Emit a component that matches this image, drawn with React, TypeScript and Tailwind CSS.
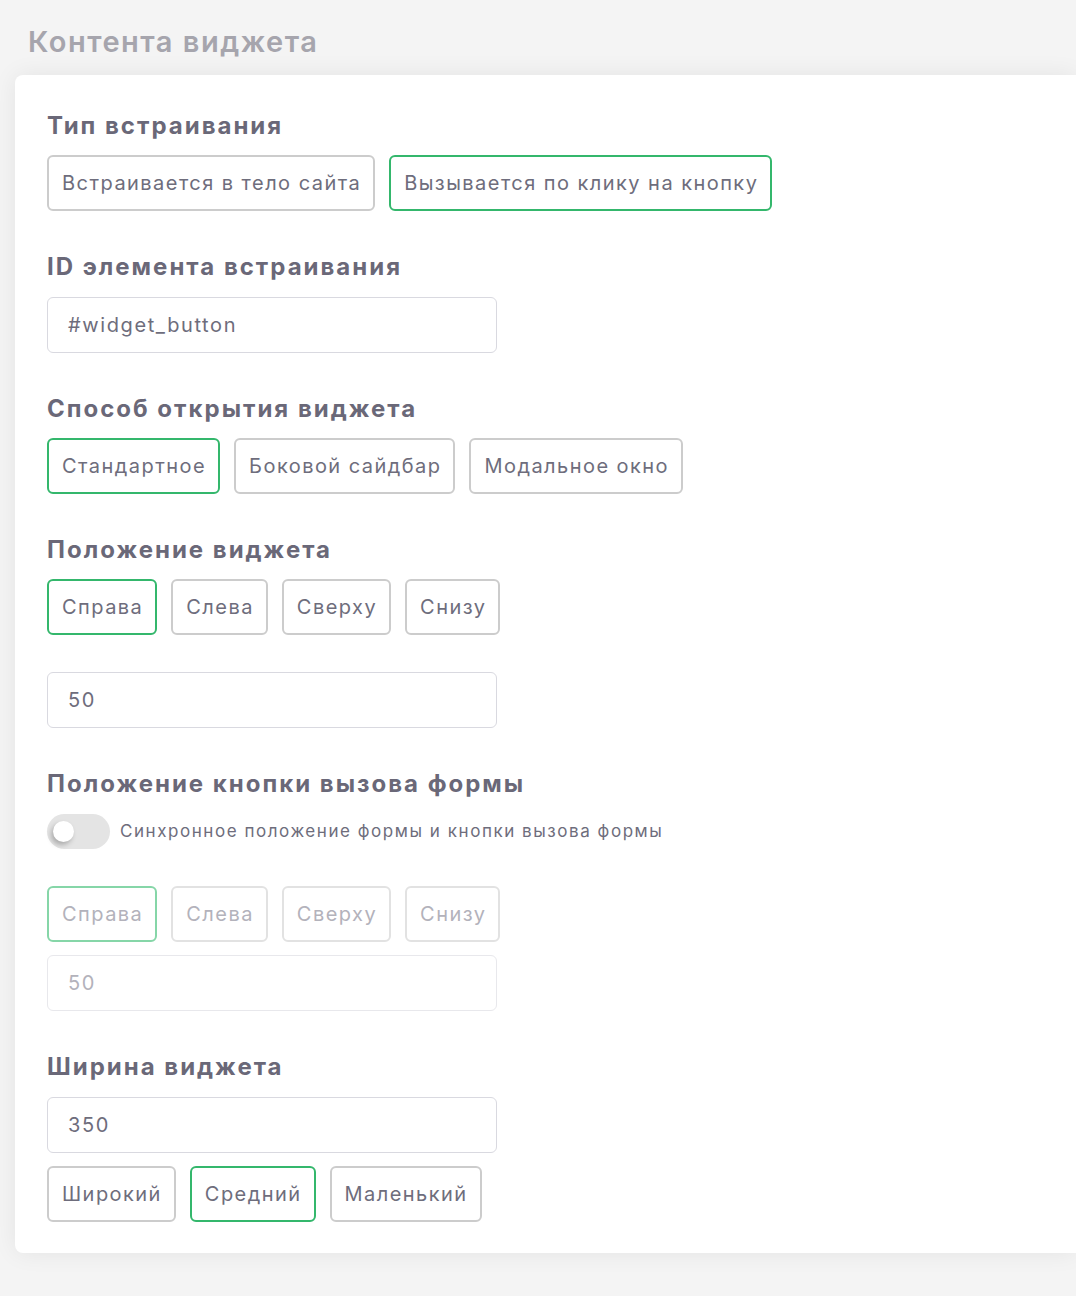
import { useState } from "react";

const font = { fontFamily: "Inter, 'Noto Sans', sans-serif" };

function Choice({
  label,
  active,
  disabled,
  onClick,
}: {
  label: string;
  active?: boolean;
  disabled?: boolean;
  onClick?: () => void;
}) {
  let cls = "border-[#cccccc] text-[#6e6d7c]";
  if (active && !disabled) cls = "border-[#34b76c] text-[#6e6d7c]";
  if (disabled) cls = active ? "border-[#86d6a8] text-[#b3b2bb]" : "border-[#e2e2e2] text-[#b3b2bb]";
  return (
    <button
      onClick={onClick}
      disabled={disabled}
      className={`h-14 pl-[13px] pr-[12px] rounded-md border-2 bg-white text-[20px] tracking-[1.45px] whitespace-nowrap ${cls}`}
    >
      {label}
    </button>
  );
}

function Field({ value, disabled }: { value: string; disabled?: boolean }) {
  return (
    <div
      className={`w-[450px] h-14 rounded-md border flex items-center px-5 text-[20px] tracking-[1.6px] ${
        disabled ? "border-[#e8e8ec] text-[#b3b2bb]" : "border-[#d9d9e0] text-[#6e6d7c]"
      }`}
    >
      {value}
    </div>
  );
}

function Heading({ children }: { children: string }) {
  return <h2 className="text-[24px] leading-7 font-bold text-[#6a6878] tracking-[2px]">{children}</h2>;
}

export default function App() {
  const [embed, setEmbed] = useState(1);
  const [openType, setOpenType] = useState(0);
  const [pos, setPos] = useState(0);
  const [size, setSize] = useState(1);
  const [sync, setSync] = useState(false);

  const sides = ["Справа", "Слева", "Сверху", "Снизу"];

  return (
    <div className="min-h-screen bg-[#f4f4f4] pt-[23px] pl-[15px] pb-[43px] overflow-hidden" style={font}>
      <h1 className="pl-[13px] text-[29px] leading-[38px] font-semibold text-[#a6a5ad] tracking-[1.5px] mb-[14px]">
        Контента виджета
      </h1>
      <div className="bg-white rounded-l-lg shadow-[0_0_24px_rgba(0,0,0,0.07)] pl-8 pt-[37px] pb-[31px]">
        <Heading>Тип встраивания</Heading>
        <div className="flex gap-[14px] mt-[15px]">
          {["Встраивается в тело сайта", "Вызывается по клику на кнопку"].map((l, i) => (
            <Choice key={l} label={l} active={embed === i} onClick={() => setEmbed(i)} />
          ))}
        </div>

        <div className="mt-[42px]">
          <Heading>ID элемента встраивания</Heading>
        </div>
        <div className="mt-[16px]">
          <Field value="#widget_button" />
        </div>

        <div className="mt-[42px]">
          <Heading>Способ открытия виджета</Heading>
        </div>
        <div className="flex gap-[14px] mt-[15px]">
          {["Стандартное", "Боковой сайдбар", "Модальное окно"].map((l, i) => (
            <Choice key={l} label={l} active={openType === i} onClick={() => setOpenType(i)} />
          ))}
        </div>

        <div className="mt-[42px]">
          <Heading>Положение виджета</Heading>
        </div>
        <div className="flex gap-[14px] mt-[15px]">
          {sides.map((l, i) => (
            <Choice key={l} label={l} active={pos === i} onClick={() => setPos(i)} />
          ))}
        </div>
        <div className="mt-[37px]">
          <Field value="50" />
        </div>

        <div className="mt-[42px]">
          <Heading>Положение кнопки вызова формы</Heading>
        </div>
        <div className="flex items-center gap-[10px] mt-[16px]">
          <button
            onClick={() => setSync(!sync)}
            className={`relative w-[63px] h-[35px] rounded-full ${sync ? "bg-[#34b76c]" : "bg-[#e4e4e4]"}`}
          >
            <span
              className={`absolute top-[7px] w-[21px] h-[21px] rounded-full bg-white shadow-[-2px_3px_5px_rgba(0,0,0,0.25)] ${
                sync ? "left-[37px]" : "left-[6px]"
              }`}
            />
          </button>
          <span className="text-[17px] text-[#6e6d7c] tracking-[1.55px]">
            Синхронное положение формы и кнопки вызова формы
          </span>
        </div>
        <div className="flex gap-[14px] mt-[37px]">
          {sides.map((l, i) => (
            <Choice key={l} label={l} active={i === 0} disabled={!sync} />
          ))}
        </div>
        <div className="mt-[13px]">
          <Field value="50" disabled />
        </div>

        <div className="mt-[42px]">
          <Heading>Ширина виджета</Heading>
        </div>
        <div className="mt-[16px]">
          <Field value="350" />
        </div>
        <div className="flex gap-[14px] mt-[13px]">
          {["Широкий", "Средний", "Маленький"].map((l, i) => (
            <Choice key={l} label={l} active={size === i} onClick={() => setSize(i)} />
          ))}
        </div>
      </div>
    </div>
  );
}
